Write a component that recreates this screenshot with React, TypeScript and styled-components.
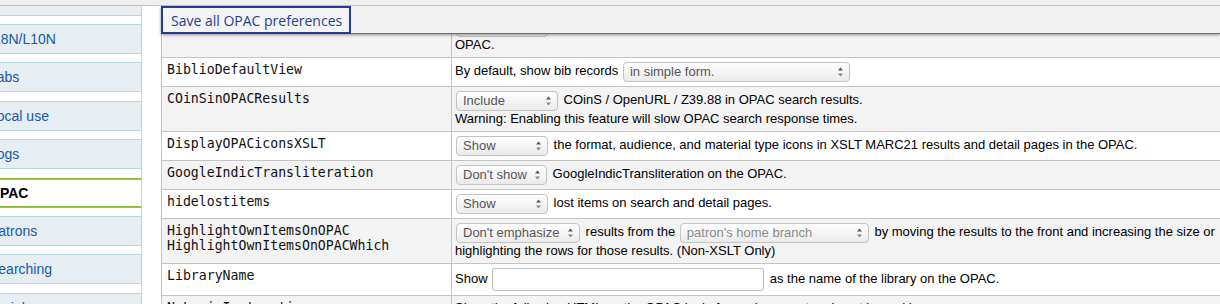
import React from "react";
import styled, { createGlobalStyle } from "styled-components";

const GlobalStyle = createGlobalStyle`
  html, body {
    margin: 0;
    padding: 0;
    background: #fff;
    overflow: hidden;
  }
  body {
    font-family: "Liberation Sans", Arial, sans-serif;
    font-size: 13px;
    color: #000;
  }
`;

const TopStrip = styled.div`
  position: fixed;
  top: 0;
  left: 0;
  right: 0;
  height: 5px;
  background: #efefef;
  border-bottom: 1px solid #c2c2c2;
  z-index: 3;
`;

const Toolbar = styled.div`
  position: fixed;
  top: 6px;
  left: 161px;
  right: 0;
  height: 27px;
  display: flex;
  align-items: flex-start;
  background: #f2f2f2;
  border-bottom: 1px solid #6e6e6e;
  box-shadow: 0 1px 3px rgba(0, 0, 0, 0.4);
  z-index: 2;
`;

const SaveButton = styled.button`
  box-sizing: border-box;
  width: 190px;
  height: 28px;
  margin: 0;
  padding: 0 8px;
  border: 2px solid #223f8e;
  background: #f4f4f4;
  color: #223f8e;
  font-family: "Open Sans", "Liberation Sans", sans-serif;
  font-size: 14px;
  white-space: nowrap;
`;

const Layout = styled.div`
  display: flex;
  align-items: flex-start;
  margin-top: -14.4px;
`;

const Menu = styled.ul`
  flex: none;
  width: 159px;
  margin: 0 0 0 -18px;
  padding: 0;
  list-style: none;
  border-right: 1px solid #b9d8d9;
`;

const MenuLink = styled.a<{ $active?: boolean }>`
  display: block;
  box-sizing: border-box;
  height: 30px;
  margin-bottom: 8.4px;
  padding-left: 7px;
  line-height: ${(p) => (p.$active ? "26px" : "28px")};
  font-size: 14px;
  white-space: nowrap;
  text-decoration: none;
  background: ${(p) => (p.$active ? "#fff" : "#e6eef3")};
  border-style: solid;
  border-width: ${(p) => (p.$active ? "2px 0" : "1px 0")};
  border-color: ${(p) => (p.$active ? "#8ec63f" : "#b9d8d9")};
  color: ${(p) => (p.$active ? "#000" : "#1a58a0")};
  font-weight: ${(p) => (p.$active ? 700 : 400)};
`;

const Main = styled.main`
  flex: none;
  margin-left: 19px;
  padding-top: 26.4px;
`;

const PrefTable = styled.table`
  width: 1090px;
  table-layout: fixed;
  border-collapse: collapse;
`;

const Row = styled.tr<{ $shaded?: boolean }>`
  background: ${(p) => (p.$shaded ? "#f3f3f3" : "#fff")};
`;

const NameCell = styled.td`
  vertical-align: top;
  padding: 4px 5px;
  border: 1px solid #c4c4c4;
  font-family: "DejaVu Sans Mono", monospace;
  font-size: 13.2px;
  line-height: 15.4px;
  color: #111;
`;

const ValueCell = styled.td`
  vertical-align: top;
  padding: 4px 3px;
  border: 1px solid #c4c4c4;
  font-size: 13px;
  line-height: 16px;
`;

const SelectBox = styled.span<{ $w: number; $muted?: boolean }>`
  display: inline-flex;
  align-items: center;
  justify-content: space-between;
  box-sizing: border-box;
  width: ${(p) => p.$w}px;
  height: 20px;
  margin: 0 2px 0 1px;
  padding: 0 6px;
  vertical-align: middle;
  border: 1px solid #c3c3c3;
  border-radius: 4px;
  background: linear-gradient(#fefefe, #ebebeb);
  color: ${(p) => (p.$muted ? "#8a8a8a" : "#555")};
  white-space: nowrap;
`;

const TextInput = styled.input`
  box-sizing: border-box;
  width: 272px;
  height: 23px;
  margin: 0 2px 0 1px;
  vertical-align: middle;
  border: 1px solid #bfbfbf;
  border-radius: 3px;
  background: #fff;
`;

const Line = styled.span`
  white-space: nowrap;
`;

const Spinner = () => (
  <svg width="5" height="12" viewBox="0 0 5 12">
    <path d="M0 4.5 L2.5 1.5 L5 4.5Z" fill="#555" />
    <path d="M0 7.5 L2.5 10.5 L5 7.5Z" fill="#888" />
  </svg>
);

const Select = ({ w, muted, children }: { w: number; muted?: boolean; children: React.ReactNode }) => (
  <SelectBox $w={w} $muted={muted}>
    <span>{children}</span>
    <Spinner />
  </SelectBox>
);

const menu = [
  "Enhanced content",
  "I18N/L10N",
  "Labs",
  "Local use",
  "Logs",
  "OPAC",
  "Patrons",
  "Searching",
  "Serials",
];

export default function App() {
  return (
    <>
      <GlobalStyle />
      <TopStrip />
      <Toolbar>
        <SaveButton>Save all OPAC preferences</SaveButton>
      </Toolbar>
      <Layout>
        <Menu>
          {menu.map((m) => (
            <li key={m}>
              <MenuLink href="#" $active={m === "OPAC"}>
                {m}
              </MenuLink>
            </li>
          ))}
        </Menu>
        <Main>
          <PrefTable>
            <colgroup>
              <col style={{ width: 290 }} />
              <col />
            </colgroup>
            <tbody>
              <Row $shaded>
                <NameCell>AuthorisedValueImages</NameCell>
                <ValueCell>
                  <Line>
                    <Select w={92}>Show</Select> images for authorized values (such as lost statuses
                    and locations) in search results and item detail pages on the
                  </Line>
                  <br />
                  OPAC.
                </ValueCell>
              </Row>
              <Row>
                <NameCell>BiblioDefaultView</NameCell>
                <ValueCell>
                  By default, show bib records <Select w={227}>in simple form.</Select>
                </ValueCell>
              </Row>
              <Row $shaded>
                <NameCell>COinSinOPACResults</NameCell>
                <ValueCell>
                  <Select w={102}>Include</Select> COinS / OpenURL / Z39.88 in OPAC search results.
                  <br />
                  Warning: Enabling this feature will slow OPAC search response times.
                </ValueCell>
              </Row>
              <Row>
                <NameCell>DisplayOPACiconsXSLT</NameCell>
                <ValueCell>
                  <Select w={92}>Show</Select> the format, audience, and material type icons in XSLT
                  MARC21 results and detail pages in the OPAC.
                </ValueCell>
              </Row>
              <Row $shaded>
                <NameCell>GoogleIndicTransliteration</NameCell>
                <ValueCell>
                  <Select w={91}>Don't show</Select> GoogleIndicTransliteration on the OPAC.
                </ValueCell>
              </Row>
              <Row>
                <NameCell>hidelostitems</NameCell>
                <ValueCell>
                  <Select w={92}>Show</Select> lost items on search and detail pages.
                </ValueCell>
              </Row>
              <Row $shaded>
                <NameCell>
                  HighlightOwnItemsOnOPAC
                  <br />
                  HighlightOwnItemsOnOPACWhich
                </NameCell>
                <ValueCell>
                  <Select w={124}>Don't emphasize</Select> results from the{" "}
                  <Select w={189} muted>
                    patron's home branch
                  </Select>{" "}
                  by moving the results to the front and increasing the size or highlighting the rows
                  for those results. (Non-XSLT Only)
                </ValueCell>
              </Row>
              <Row>
                <NameCell>LibraryName</NameCell>
                <ValueCell>
                  Show <TextInput type="text" defaultValue="" /> as the name of the library on the
                  OPAC.
                </ValueCell>
              </Row>
              <Row $shaded>
                <NameCell>NoLoginInstructions</NameCell>
                <ValueCell>
                  Show the following HTML on the OPAC login form when a patron is not logged in:
                </ValueCell>
              </Row>
            </tbody>
          </PrefTable>
        </Main>
      </Layout>
    </>
  );
}
